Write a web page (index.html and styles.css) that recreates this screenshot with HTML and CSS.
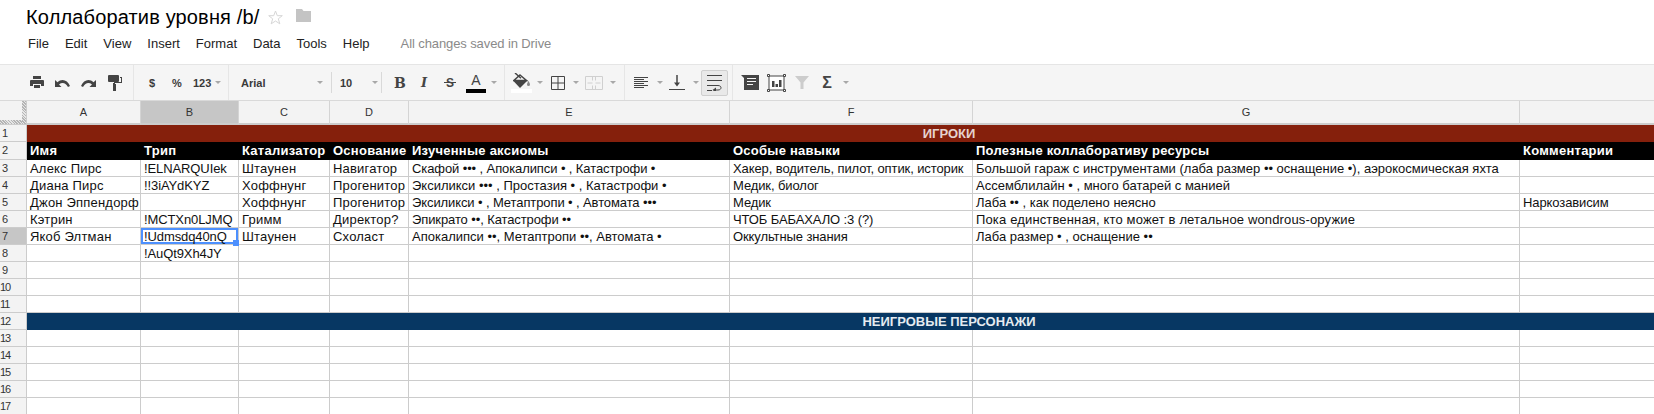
FILE: index.html
```html
<!DOCTYPE html>
<html lang="ru">
<head>
<meta charset="utf-8">
<title>Коллаборатив уровня /b/</title>
<link rel="stylesheet" href="styles.css">
</head>
<body>
<header class="doc-head">
  <div class="title-row">
    <span class="doc-title">Коллаборатив уровня /b/</span>
    <svg class="star" width="15" height="15" viewBox="0 0 15 15"><path d="M7.500 1l1.800 4.700h5l-4 3.100 1.500 5L7.500 11l-4.300 2.800 1.500-5-4-3.100h5z" fill="#fff" stroke="#d6d6d6"/></svg>
    <svg class="folder" width="15" height="13" viewBox="0 0 15 13"><path d="M0 0h6l1.500 2H15v11H0z" fill="#c4c4c4"/></svg>
  </div>
  <nav class="menu-row">
    <span>File</span><span>Edit</span><span>View</span><span>Insert</span><span>Format</span><span>Data</span><span>Tools</span><span>Help</span>
    <span class="saved">All changes saved in Drive</span>
  </nav>
</header>
<div class="toolbar">
  <div class="tb-group g1">
    <svg class="ic" width="14" height="13" viewBox="0 0 14 13"><path d="M3 0h8v3H3zM1 4h12a1 1 0 0 1 1 1v5h-3V8H3v2H0V5a1 1 0 0 1 1-1zM4 9h6v3H4z" fill="#444"/></svg>
    <svg class="ic ml-11" width="15" height="8" viewBox="0 0 15 8"><path d="M0 1v7h6.500L4 5.500C7 3.200 10.500 3.500 13 8l2-1C12.500 .5 6.500-.8 2.500 3.200z" fill="#444"/></svg>
    <svg class="ic ml-11" width="15" height="8" viewBox="0 0 15 8"><path d="M15 1v7H8.500L11 5.500C8 3.200 4.500 3.500 2 8L0 7C2.500 .5 8.500-.8 12.500 3.200z" fill="#444"/></svg>
    <svg class="ic ml-12" width="14" height="16" viewBox="0 0 14 16"><path d="M1 0h9a1 1 0 0 1 1 1v5a1 1 0 0 1-1 1H1a1 1 0 0 1-1-1V1a1 1 0 0 1 1-1zM12 2h2v6H7v1h1v7H5V8h1V7h7V3h-1z" fill="#444"/></svg>
  </div>
  <div class="tb-group g2">
    <span class="tb-txt w-dollar">$</span><span class="tb-txt w-pct">%</span><span class="tb-txt w-num">123</span><i class="caret ml-4"></i>
  </div>
  <div class="tb-group g3">
    <span class="tb-txt font-name">Arial</span><i class="caret"></i><b class="vsep ml-8"></b>
    <span class="tb-txt font-size">10</span><i class="caret"></i><b class="vsep ml-3"></b>
    <span class="fmt fmt-b">B</span>
    <span class="fmt fmt-i">I</span>
    <span class="fmt fmt-s">S</span>
    <span class="txt-color">A</span><i class="caret ml-5"></i>
  </div>
  <div class="tb-group g4">
    <span class="fill-wrap"><svg class="ic" width="18" height="15" viewBox="0 0 18 15"><path d="M2 0l6 5.200" stroke="#444" stroke-width="1.500" fill="none"/><path d="M7 2l6.500 5.500H.8z" fill="none" stroke="#444" stroke-width="1.500"/><path d="M0 7.500h14.500L7 15z" fill="#444"/><path d="M15.500 8c.8 1.500 1.500 2.500 1.500 3.500a1.500 1.500 0 0 1-3 0c0-1 .7-2 1.500-3.500z" fill="#888"/></svg><b class="fill-bar"></b></span><i class="caret ml-5"></i>
    <svg class="ic ml-8" width="14" height="14" viewBox="0 0 14 14"><path d="M.5.500h13v13H.5zM7 .500v13M.5 7h13" fill="none" stroke="#444"/></svg><i class="caret ml-8"></i>
    <svg class="ic ml-6" width="18" height="14" viewBox="0 0 18 14"><path d="M.5.500h17v13H.5zM7.500 .500v4M7.500 9.500v4M10.500 .500v4M10.500 9.500v4M2.500 7h5M15.500 7h-5" fill="none" stroke="#d0d0d0"/></svg><i class="caret ml-7"></i>
  </div>
  <div class="tb-group g5">
    <svg class="ic" width="14" height="12" viewBox="0 0 14 12"><path d="M0 .500h14M0 2.500h10M0 4.500h14M0 6.500h10M0 8.500h14M0 10.500h10" stroke="#444" fill="none"/></svg><i class="caret ml-9"></i>
    <svg class="ic ml-6" width="16" height="15" viewBox="0 0 16 15"><path d="M8 0v9" stroke="#444" stroke-width="1.500"/><path d="M5 7.500h6L8 11.500z" fill="#444"/><path d="M0 14.500h16" stroke="#444"/></svg><i class="caret ml-8"></i>
    <span class="active-btn"><svg class="ic" width="15" height="16" viewBox="0 0 15 16"><path d="M0 .500h15M0 5.500h15M0 10.500h11c4 0 4 4.500 0 4.500H8M0 15.500h5" stroke="#444" fill="none"/><path d="M9 12.500v5L5.500 15z" fill="#444"/></svg></span>
  </div>
  <div class="tb-group g6">
    <svg class="ic" width="18" height="15" viewBox="0 0 18 15"><path d="M0 0h3v3zM3 0h15v15H3zM6 3v1h9V3zM6 6v1h9V6zM6 9v1h6V9z" fill="#444" fill-rule="evenodd"/></svg>
    <svg class="ic ml-8" width="19" height="18" viewBox="0 0 19 18"><path d="M2 2h15v14H2z" fill="#fff" stroke="#444"/><path d="M.5.500h2v2h-2zM16.500.500h2v2h-2zM.5 15.500h2v2h-2zM16.500 15.500h2v2h-2z" fill="#fff" stroke="#444"/><path d="M5 7h2.500v6H5zM8.500 10H11v3H8.500zM12 6h2.500v7H12z" fill="#444"/></svg>
    <svg class="ic ml-9" width="14" height="13" viewBox="0 0 14 13"><path d="M0 0h14L8.500 6.500V13h-3V6.500z" fill="#ccc"/></svg>
    <span class="sigma">Σ</span><i class="caret ml-11"></i>
  </div>
</div>
<div class="sheet">
  <div class="corner"></div>
  <div class="colh">A</div><div class="colh sel">B</div><div class="colh">C</div><div class="colh">D</div><div class="colh">E</div><div class="colh">F</div><div class="colh">G</div><div class="colh"></div>

  <div class="rowh">1</div><div class="c banner red">ИГРОКИ</div>

  <div class="rowh">2</div><div class="c hd">Имя</div><div class="c hd">Трип</div><div class="c hd">Катализатор</div><div class="c hd">Основание</div><div class="c hd">Изученные аксиомы</div><div class="c hd">Особые навыки</div><div class="c hd">Полезные коллаборативу ресурсы</div><div class="c hd">Комментарии</div>

  <div class="rowh">3</div><div class="c">Алекс Пирс</div><div class="c lat">!ELNARQUIek</div><div class="c">Штаунен</div><div class="c">Навигатор</div><div class="c e">Скафой ••• , Апокалипси • , Катастрофи •</div><div class="c e">Хакер, водитель, пилот, оптик, историк</div><div class="c plain">Большой гараж с инструментами (лаба размер •• оснащение •), аэрокосмическая яхта</div><div class="c"></div>

  <div class="rowh">4</div><div class="c">Диана Пирс</div><div class="c lat">!!3iAYdKYZ</div><div class="c">Хоффнунг</div><div class="c">Прогенитор</div><div class="c plain">Эксиликси ••• , Простазия • , Катастрофи •</div><div class="c e">Медик, биолог</div><div class="c plain">Ассемблилайн • , много батарей с манией</div><div class="c"></div>

  <div class="rowh">5</div><div class="c">Джон Эппендорф</div><div class="c"></div><div class="c">Хоффнунг</div><div class="c">Прогенитор</div><div class="c e">Эксиликси • , Метаптропи • , Автомата •••</div><div class="c e">Медик</div><div class="c plain">Лаба •• , как поделено неясно</div><div class="c e">Наркозависим</div>

  <div class="rowh">6</div><div class="c">Кэтрин</div><div class="c lat">!MCTXn0LJMQ</div><div class="c">Гримм</div><div class="c">Директор?</div><div class="c e">Эпикрато ••, Катастрофи ••</div><div class="c e">ЧТОБ БАБАХАЛО :3 (?)</div><div class="c open">Пока единственная, кто может в летальное wondrous-оружие</div><div class="c"></div>

  <div class="rowh sel">7</div><div class="c">Якоб Элтман</div><div class="c lat active">!Udmsdq40nQ<i class="handle"></i></div><div class="c">Штаунен</div><div class="c">Схоласт</div><div class="c plain">Апокалипси ••, Метаптропи ••, Автомата •</div><div class="c e">Оккультные знания</div><div class="c plain">Лаба размер • , оснащение ••</div><div class="c"></div>

  <div class="rowh">8</div><div class="c"></div><div class="c lat">!AuQt9Xh4JY</div><div class="c"></div><div class="c"></div><div class="c"></div><div class="c"></div><div class="c"></div><div class="c"></div>

  <div class="rowh">9</div><div class="c"></div><div class="c"></div><div class="c"></div><div class="c"></div><div class="c"></div><div class="c"></div><div class="c"></div><div class="c"></div>
  <div class="rowh two">10</div><div class="c"></div><div class="c"></div><div class="c"></div><div class="c"></div><div class="c"></div><div class="c"></div><div class="c"></div><div class="c"></div>
  <div class="rowh two">11</div><div class="c"></div><div class="c"></div><div class="c"></div><div class="c"></div><div class="c"></div><div class="c"></div><div class="c"></div><div class="c"></div>

  <div class="rowh two">12</div><div class="c banner blue">НЕИГРОВЫЕ ПЕРСОНАЖИ</div>

  <div class="rowh two">13</div><div class="c"></div><div class="c"></div><div class="c"></div><div class="c"></div><div class="c"></div><div class="c"></div><div class="c"></div><div class="c"></div>
  <div class="rowh two">14</div><div class="c"></div><div class="c"></div><div class="c"></div><div class="c"></div><div class="c"></div><div class="c"></div><div class="c"></div><div class="c"></div>
  <div class="rowh two">15</div><div class="c"></div><div class="c"></div><div class="c"></div><div class="c"></div><div class="c"></div><div class="c"></div><div class="c"></div><div class="c"></div>
  <div class="rowh two">16</div><div class="c"></div><div class="c"></div><div class="c"></div><div class="c"></div><div class="c"></div><div class="c"></div><div class="c"></div><div class="c"></div>
  <div class="rowh two">17</div><div class="c"></div><div class="c"></div><div class="c"></div><div class="c"></div><div class="c"></div><div class="c"></div><div class="c"></div><div class="c"></div>
</div>
</body>
</html>
```
FILE: styles.css
```css
* { box-sizing: border-box; }
html, body { margin: 0; height: 414px; overflow: hidden; background: #fff; }
body { font-family: "Liberation Sans", Arial, sans-serif; color: #000; }

.doc-head { height: 65px; padding-left: 26px; border-bottom: 1px solid #e5e5e5; }
.title-row { height: 34px; display: flex; align-items: center; }
.doc-title { font-size: 20px; line-height: 34px; letter-spacing: .15px; }
.star { margin-left: 9px; }
.folder { margin-left: 13px; margin-bottom: 3px; }
.menu-row { display: flex; height: 18px; align-items: center; font-size: 13px; color: #222; padding-left: 2px; gap: 16px; }
.saved { color: #8a8a8a; margin-left: 15px; letter-spacing: -.1px; }

.toolbar { height: 36px; background: #f5f5f5; border-bottom: 1px solid #d9d9d9; display: flex; }
.tb-group { height: 35px; display: flex; align-items: center; border-right: 1px solid #e6e6e6; flex: none; }
.g1 { width: 134px; padding-left: 30px; }
.g2 { width: 95px; padding-left: 15px; }
.g3 { width: 276px; padding-left: 12px; }
.g4 { width: 120px; padding-left: 6px; }
.g5 { width: 108px; padding-left: 9px; }
.g6 { flex: 1; border-right: 0; padding-left: 8px; }
.ic { flex: none; display: block; }
.ml-3 { margin-left: 3px; }
.ml-4 { margin-left: 4px; }
.ml-5 { margin-left: 5px; }
.ml-6 { margin-left: 6px; }
.ml-7 { margin-left: 7px; }
.ml-8 { margin-left: 8px; }
.ml-9 { margin-left: 9px; }
.ml-11 { margin-left: 11px; }
.ml-12 { margin-left: 12px; }
.tb-txt { font-size: 11px; font-weight: bold; color: #3a3a3a; flex: none; }
.w-dollar { width: 23px; }
.w-pct { width: 21px; }
.w-num { width: 18px; }
.caret { display: block; width: 0; height: 0; border: 3px solid transparent; border-top: 3px solid #a8a8a8; border-bottom: 0; flex: none; }
.font-name { width: 76px; }
.font-size { width: 32px; margin-left: 8px; }
.vsep { width: 1px; height: 21px; background: #d9d9d9; flex: none; }
.fmt { flex: none; color: #444; text-align: center; font-weight: bold; line-height: 16px; }
.fmt-b { width: 9px; margin-left: 12px; font: bold 14px/16px "DejaVu Serif", serif; }
.fmt-i { width: 10px; margin-left: 16px; font: italic bold 13px/16px "DejaVu Serif", serif; }
.fmt-s { width: 12px; margin-left: 15px; font-size: 12px; background: linear-gradient(#444, #444) center / 100% 1px no-repeat; }
.txt-color { flex: none; font-size: 14px; color: #444; margin-left: 10px; width: 20px; height: 19px; text-align: center; line-height: 13px; border-bottom: 4px solid #000; margin-top: 2px; }
.fill-wrap { flex: none; width: 21px; height: 21px; display: flex; flex-direction: column; align-items: center; margin-top: 2px; }
.fill-bar { flex: none; width: 21px; height: 4px; background: #fff; margin-top: 1px; }
.active-btn { flex: none; width: 27px; height: 26px; margin-left: 2px; background: #e9e9e9; border: 1px solid #cfcfcf; border-radius: 2px; display: flex; align-items: center; justify-content: center; }
.sigma { flex: none; width: 10px; margin-left: 13px; font-size: 16px; font-weight: bold; color: #444; line-height: 16px; text-align: center; }

.sheet {
  display: grid;
  width: 1870px;
  grid-template-columns: 27px 114px 98px 91px 79px 321px 243px 547px 348px;
  grid-template-rows: 24px 17px 18px repeat(15, 17px);
  font-size: 13px;
}
.corner {
  border-right: 1px solid #ccc;
  border-bottom: 1px solid #ccc;
  background:
    repeating-linear-gradient(45deg, #b4b4b4 0 1px, #e6e6e6 1px 2px) right top / 4px 100% no-repeat,
    repeating-linear-gradient(45deg, #b4b4b4 0 1px, #e6e6e6 1px 2px) left bottom / 100% 4px no-repeat,
    #f3f3f3;
}
.colh { background: #f3f3f3; border-right: 1px solid #d4d4d4; border-bottom: 2px solid #ccc; font-size: 11px; color: #333; text-align: center; line-height: 22px; }
.colh.sel { background: #c6c6c6; }
.rowh { background: #f3f3f3; border-right: 1px solid #ccc; border-bottom: 1px solid #ccc; font-size: 11px; color: #333; padding-left: 2px; line-height: 16px; white-space: nowrap; }
.rowh.two { padding-left: 0; letter-spacing: -1px; }
.rowh.sel { background: #c6c6c6; }
.c { border-right: 1px solid #ccc; border-bottom: 1px solid #ccc; padding-left: 3px; line-height: 17px; white-space: nowrap; overflow: hidden; color: #111; position: relative; letter-spacing: .2px; }
.e { letter-spacing: -.1px; }
.plain { letter-spacing: 0; }
.open { letter-spacing: .15px; }
.lat { letter-spacing: -.1px; }
.hd { background: #000; color: #fff; font-weight: bold; border: 0; line-height: 18px; letter-spacing: .25px; }
.banner { grid-column: 2 / -1; text-align: center; font-size: 13px; font-weight: bold; border: 0; letter-spacing: 0; }
.red { background: #85200c; color: #e6d2ce; }
.blue { background: #073763; color: #e5ebf0; }
.active { overflow: visible; box-shadow: inset 0 0 0 2px #4d90fe; }
.handle { position: absolute; right: -1px; bottom: -2px; width: 6px; height: 6px; background: #4d90fe; z-index: 2; }
```
